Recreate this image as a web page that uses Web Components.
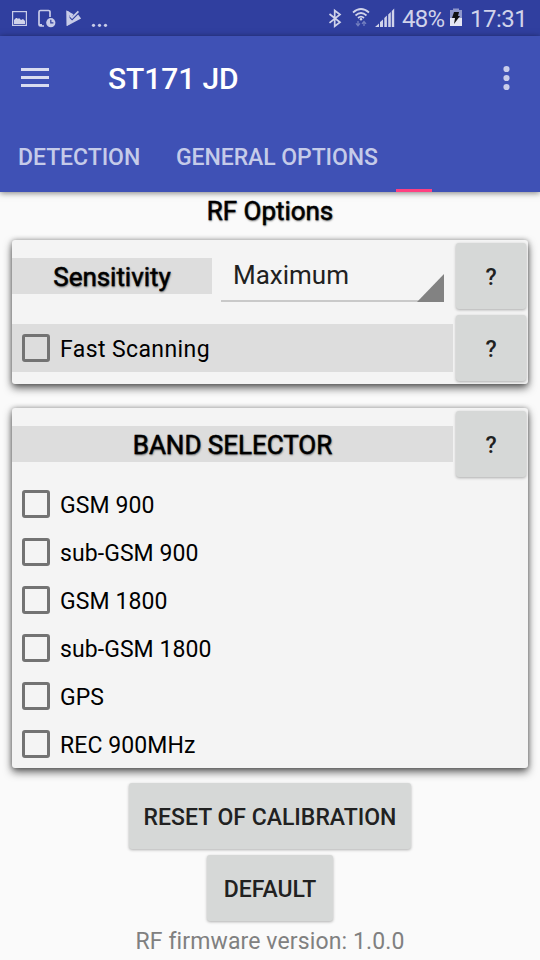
<!DOCTYPE html>
<html lang="en">
<head>
<meta charset="utf-8">
<title>ST171 JD</title>
<style>
html,body{margin:0;padding:0}
body{width:540px;height:960px;overflow:hidden;background:#fafafa;font-family:Roboto,"Noto Sans",sans-serif;color:#000}
</style>
</head>
<body>
<rf-screen></rf-screen>
<script>
function define(name, html) {
  const template = document.createElement('template');
  template.innerHTML = html;
  customElements.define(name, class extends HTMLElement {
    constructor() {
      super();
      this.attachShadow({mode: 'open'}).append(template.content.cloneNode(true));
    }
  });
}

define('status-bar', `
<style>
:host{display:flex;height:36px;background:#303f9f;color:#d0d3ea;font-size:24px;line-height:38px}
svg{display:block;flex:none}
.t{white-space:nowrap}
.pct{margin-left:2px;width:48px;letter-spacing:-.8px}
.clock{margin-left:8px;letter-spacing:-.5px}
</style>
<svg width="322" height="36" viewBox="0 0 322 36">
 <rect x="12.6" y="11.6" width="13.8" height="13.8" fill="none" stroke="#c8cce8" stroke-width="1.2"/>
 <path d="M14 24v-4l2-2h1l1 1 1-1 2 2 2-1 2 2v3z" fill="#d0d3ea"/>
 <path d="M44 26h-3.500a1.500 1.500 0 0 1-1.500-1.500v-12.500a1.500 1.500 0 0 1 1.500-1.500h8a1.500 1.500 0 0 1 1.500 1.500v5" fill="none" stroke="#c8cce8" stroke-width="1.700"/>
 <path d="M39 24h3v2h-3z" fill="#c8cce8"/>
 <circle cx="50.800" cy="22.700" r="4.600" fill="#c8cce8"/><path d="M50.800 19.800v3h2.600" fill="none" stroke="#303f9f" stroke-width="1.200"/>
 <path d="M66.500 10.500L73.500 14.200l-1.800 2.800-2-2-1.600 1.600 4 4 6-6 3 4L67 26z" fill="#c8cce8"/>
 <path d="M66.500 10.500v15.500l3-1.700V12z" fill="#c8cce8"/>
 <path d="M69.800 15.300l2.300 2.400 6.300-6.400" fill="none" stroke="#c8cce8" stroke-width="1.700"/>
 <g fill="#c8cce8"><circle cx="93.500" cy="25.300" r="1.600"/><circle cx="99.500" cy="25.300" r="1.600"/><circle cx="105.500" cy="25.300" r="1.600"/></g>
</svg>
<svg width="78" height="36" viewBox="322 0 78 36">
 <path d="M329.500 14l10.500 8.300-5.300 4V10.500l5.300 4-10.500 8.300" fill="none" stroke="#d0d3ea" stroke-width="1.700"/>
 <g fill="none" stroke="#d0d3ea" stroke-width="1.700"><path d="M353 12.500q8-7 16 0"/><path d="M355.500 15.500q5.500-5 11 0"/><path d="M358 18q3-2.600 6 0"/></g>
 <circle cx="361" cy="19.300" r="1.200" fill="#d0d3ea"/>
 <path d="M358 21v4M356 23.300l2 2.400 2-2.400M364 26v-4M362 23.800l2-2.400 2 2.400" fill="none" stroke="#737fc0" stroke-width="1.300"/>
 <path d="M375 27l4-3.500V27zM380 27v-5l3-2.500V27zM384.300 27v-9l2.600-2.500V27zM388.200 27V14.500l2.600-2.500V27zM391.800 27V11l2.400-2.500V27z" fill="#d0d3ea"/>
</svg>
<span class="t pct">48%</span>
<svg width="12" height="36" viewBox="0 0 12 36"><path d="M0 10h3V8.500h6V10h3v16H0z" fill="#8f97cb"/><path d="M0 18h12v8H0z" fill="#e6e7f3"/><path d="M4 12h5l-1 4h2l-6 8 1-6H2z" fill="#111"/></svg>
<span class="t clock">17:31</span>`);

define('app-header', `
<style>
:host{display:block;height:156px;background:#3f51b5;box-shadow:0 1px 6px rgba(0,0,0,.5);position:relative;color:#fff}
.bar{display:flex;align-items:center;height:84px;padding:0 30px 0 21px}
.bar svg{flex:none}
h1{font-size:30px;font-weight:500;line-height:36px;margin:0 auto 0 59px;padding-top:2px;letter-spacing:-.1px}
nav{display:flex;height:72px;font-size:23px;font-weight:500;line-height:76px;color:#c5cbe9}
.tab{box-sizing:border-box;padding-left:18px;white-space:nowrap}
.a{width:158px;letter-spacing:-.05px}.b{width:238px;letter-spacing:-.07px}
.on{width:36px;height:72px;border-bottom:3px solid #ff4081}
</style>
<div class="bar"><svg width="28" height="20"><path d="M0 1.500h28M0 9.500h28M0 17.500h28" stroke="#d9dcf0" stroke-width="3"/></svg><h1>ST171 JD</h1><svg width="7" height="26"><g fill="#c9cdea"><circle cx="3.500" cy="4" r="3.100"/><circle cx="3.500" cy="13" r="3.100"/><circle cx="3.500" cy="22" r="3.100"/></g></svg></div>
<nav><span class="tab a">DETECTION</span><span class="tab b">GENERAL OPTIONS</span><span class="tab on"></span></nav>`);

define('raised-button', `
<style>
:host{display:flex;align-items:center;justify-content:center;box-sizing:border-box;height:66px;border-radius:3px;background:#d6d8d7;box-shadow:0 1px 3px rgba(0,0,0,.3);font-size:23px;font-weight:500;color:#212121;white-space:nowrap;padding-top:2px}
</style><slot></slot>`);

define('check-row', `
<style>
:host{display:flex;align-items:center;height:48px;box-sizing:border-box;padding-left:10px;font-size:23px;letter-spacing:.08px;white-space:nowrap}
i{box-sizing:border-box;width:28px;height:28px;border:3px solid #737373;border-radius:3px;margin-right:10px;flex:none}
span{padding-top:2px}
</style><i></i><span><slot></slot></span>`);

define('section-label', `
<style>
:host{display:block;height:36px;line-height:39px;text-align:center;font-size:26px;font-weight:400;letter-spacing:-.03px;-webkit-text-stroke:.5px #000;text-shadow:.5px 1px 2px rgba(0,0,0,.6);white-space:nowrap}
</style><slot></slot>`);

define('drop-down', `
<style>
:host{display:block;position:relative;box-sizing:border-box;width:223px;height:62px;padding-left:12px;font-size:26px;line-height:70px;color:#212121;border-bottom:2px solid #c9c9c9}
svg{position:absolute;right:0;bottom:-2px}
</style><slot></slot><svg width="27" height="28"><path d="M27 0v28H0z" fill="#828282"/></svg>`);

define('option-card', `
<style>
:host{display:block;box-sizing:border-box;width:516px;border-radius:3px;background:#f4f4f4;box-shadow:0 4px 8px rgba(0,0,0,.62),0 0 5px rgba(0,0,0,.3)}
</style><slot></slot>`);

define('rf-screen', `
<style>
:host{display:flex;flex-direction:column;width:540px;height:960px;background:#fafafa}
main{display:flex;flex-direction:column;align-items:center}
.title{height:48px}
.one{height:144px;margin-bottom:24px}
.two{height:360px;margin-bottom:15px}
.row{display:flex;height:72px}
.gray{background:#ddd}
.sens{width:200px;margin:18px 9px 0 0}
.q{width:70px;margin:3px 2px 0 auto}
.fast{width:441px;margin-top:12px;letter-spacing:.4px}
.band{width:441px;margin-top:18px}
.reset{width:282px;margin-bottom:6px}
.def{width:126px}
.ver{font-size:23px;color:#808080;line-height:36px;margin-top:3px;letter-spacing:.12px;white-space:nowrap}
</style>
<status-bar></status-bar>
<app-header></app-header>
<main>
<section-label class="title">RF Options</section-label>
<option-card class="one">
 <div class="row"><section-label class="gray sens">Sensitivity</section-label><drop-down>Maximum</drop-down><raised-button class="q">?</raised-button></div>
 <div class="row"><check-row class="gray fast">Fast Scanning</check-row><raised-button class="q">?</raised-button></div>
</option-card>
<option-card class="two">
 <div class="row"><section-label class="gray band">BAND SELECTOR</section-label><raised-button class="q">?</raised-button></div>
 <check-row>GSM 900</check-row><check-row>sub-GSM 900</check-row><check-row>GSM 1800</check-row><check-row>sub-GSM 1800</check-row><check-row>GPS</check-row><check-row>REC 900MHz</check-row>
</option-card>
<raised-button class="reset">RESET OF CALIBRATION</raised-button>
<raised-button class="def">DEFAULT</raised-button>
<div class="ver">RF firmware version: 1.0.0</div>
</main>`);
</script>
</body>
</html>
